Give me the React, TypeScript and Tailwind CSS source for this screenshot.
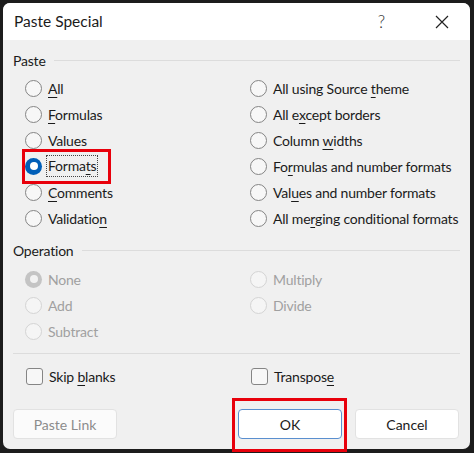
import React from 'react';

const font = { fontFamily: 'Lato, "Noto Sans", sans-serif' };

function Label({ text, u, disabled }: { text: string; u?: number; disabled?: boolean }) {
    if (u === undefined) return <span>{text}</span>;
    return (
        <span>
            {text.slice(0, u)}
            <span className={disabled ? '' : 'underline underline-offset-[3px] decoration-1'}>{text[u]}</span>
            {text.slice(u + 1)}
        </span>
    );
}

function Radio({ text, u, checked, disabled, focus }: { text: string; u?: number; checked?: boolean; disabled?: boolean; focus?: boolean }) {
    let circle;
    if (checked && !disabled) {
        circle = (
            <span className="w-[17px] h-[17px] rounded-full bg-[#005fb8] flex items-center justify-center shrink-0">
                <span className="w-[8px] h-[8px] rounded-full bg-white" />
            </span>
        );
    } else if (checked && disabled) {
        circle = (
            <span className="w-[17px] h-[17px] rounded-full bg-[#c4c4c4] flex items-center justify-center shrink-0">
                <span className="w-[8px] h-[8px] rounded-full bg-[#f2f2f2]" />
            </span>
        );
    } else if (disabled) {
        circle = <span className="w-[17px] h-[17px] rounded-full border border-[#d4d4d4] bg-[#f5f5f5] shrink-0" />;
    } else {
        circle = <span className="w-[17px] h-[17px] rounded-full border border-[#858585] bg-[#f7f7f7] shrink-0" />;
    }
    return (
        <div className={`h-[26px] flex items-center gap-[6px] text-[14px] tracking-[-0.2px] whitespace-nowrap ${disabled ? 'text-[#a0a0a0]' : 'text-[#1b1b1b]'}`}>
            {circle}
            <span className={focus ? 'border border-dotted border-[#444] px-[1px] -ml-[2px] leading-[20px]' : ''}>
                <Label text={text} u={u} disabled={disabled} />
            </span>
        </div>
    );
}

function Check({ text, u }: { text: string; u: number }) {
    return (
        <div className="h-[26px] flex items-center gap-[6px] text-[14px] tracking-[-0.2px] text-[#1b1b1b] whitespace-nowrap">
            <span className="w-[17px] h-[17px] rounded-[3px] border border-[#858585] bg-[#f7f7f7] shrink-0" />
            <Label text={text} u={u} />
        </div>
    );
}

function Section({ title }: { title: string }) {
    return (
        <div className="h-[20px] flex items-center text-[14px] tracking-[-0.2px] text-[#1b1b1b]">
            <span>{title}</span>
            <span className="flex-1 h-px bg-[#dcdcdc] ml-[8px] mt-[1px]" />
        </div>
    );
}

export default function App() {
    const pasteLeft = [
        { t: 'All', u: 0 },
        { t: 'Formulas', u: 0 },
        { t: 'Values', u: 0 },
        { t: 'Formats', u: 5, checked: true, focus: true },
        { t: 'Comments', u: 0 },
        { t: 'Validation', u: 9 },
    ];
    const pasteRight = [
        { t: 'All using Source theme', u: 17 },
        { t: 'All except borders', u: 5 },
        { t: 'Column widths', u: 7 },
        { t: 'Formulas and number formats', u: 2 },
        { t: 'Values and number formats', u: 3 },
        { t: 'All merging conditional formats', u: 6 },
    ];

    return (
        <div className="relative w-[474px] h-[453px] bg-[#1c1c1c] pt-[3px] pl-[3px] pr-[4px] pb-[4px]" style={font}>
            <div className="w-full h-full bg-[#f0f0f0] rounded-[7px] overflow-hidden flex flex-col">
                <div className="h-[37px] bg-white flex items-center pl-[11px] shrink-0">
                    <span className="text-[15.5px] text-[#1b1b1b] flex-1">Paste Special</span>
                    <span className="text-[17px] text-[#333] font-light mr-[50px]">?</span>
                    <svg width="14" height="14" viewBox="0 0 14 14" className="mr-[21px]">
                        <path d="M1 1 L13 13 M13 1 L1 13" stroke="#222" strokeWidth="1.2" fill="none" />
                    </svg>
                </div>

                <div className="flex-1 pt-[10px] px-[10px] flex flex-col">
                    <Section title="Paste" />
                    <div className="grid grid-cols-[225px_1fr] pl-[12px] mt-[5px]">
                        <div className="flex flex-col">
                            {pasteLeft.map(r => (
                                <Radio key={r.t} text={r.t} u={r.u} checked={r.checked} focus={r.focus} />
                            ))}
                        </div>
                        <div className="flex flex-col">
                            {pasteRight.map(r => (
                                <Radio key={r.t} text={r.t} u={r.u} />
                            ))}
                        </div>
                    </div>

                    <div className="mt-[9px]">
                        <Section title="Operation" />
                    </div>
                    <div className="grid grid-cols-[225px_1fr] pl-[12px] mt-[6px]">
                        <div className="flex flex-col">
                            <Radio text="None" checked disabled />
                            <Radio text="Add" disabled />
                            <Radio text="Subtract" disabled />
                        </div>
                        <div className="flex flex-col">
                            <Radio text="Multiply" disabled />
                            <Radio text="Divide" disabled />
                        </div>
                    </div>

                    <div className="h-px bg-[#dcdcdc] mt-[9px]" />

                    <div className="grid grid-cols-[225px_1fr] pl-[13px] mt-[9px]">
                        <Check text="Skip blanks" u={5} />
                        <Check text="Transpose" u={8} />
                    </div>

                    <div className="flex items-center mt-[20px]">
                        <button className="w-[104px] h-[30px] bg-[#fbfbfb] border border-[#e2e2e2] rounded-[4px] text-[14px] text-[#8c8c8c]">
                            Paste Link
                        </button>
                        <div className="flex-1" />
                        <button className="w-[104px] h-[30px] bg-white border border-[#5a8fcf] rounded-[4px] text-[14px] text-[#1b1b1b]">
                            OK
                        </button>
                        <button className="w-[104px] h-[30px] bg-white border border-[#e2e2e2] rounded-[4px] text-[14px] text-[#1b1b1b] ml-[13px] mr-[1px]">
                            Cancel
                        </button>
                    </div>
                </div>
            </div>

            <div className="absolute left-[22px] top-[149px] w-[89px] h-[35px] border-[3px] border-[#e8000b]" />
            <div className="absolute left-[232px] top-[398px] w-[115px] h-[54px] border-[3px] border-[#e8000b]" />
        </div>
    );
}
